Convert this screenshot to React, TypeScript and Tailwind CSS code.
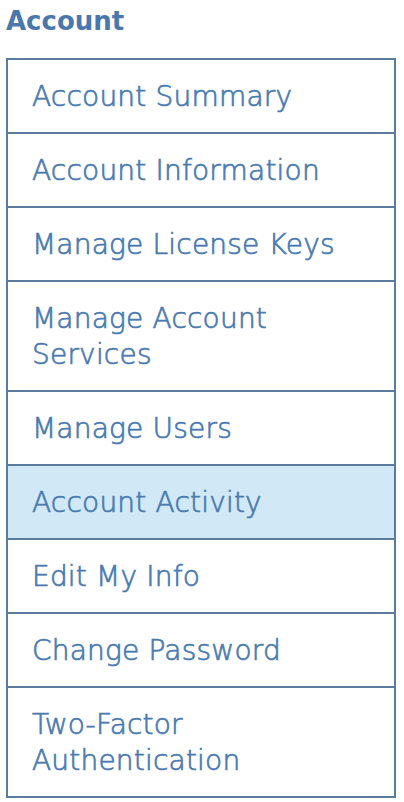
import React from "react";

const items = [
  { label: "Account Summary" },
  { label: "Account Information" },
  { label: "Manage License Keys" },
  { label: "Manage Account Services" },
  { label: "Manage Users" },
  { label: "Account Activity", active: true },
  { label: "Edit My Info" },
  { label: "Change Password" },
  { label: "Two-Factor Authentication" },
];

export default function App() {
  return (
    <div
      className="bg-white w-[404px] h-[802px] pl-[6px]"
      style={{ fontFamily: '"DejaVu Sans", sans-serif' }}
    >
      <h1 className="text-[26px] font-semibold text-[#4a78ab] leading-[42px] h-[58px]">
        Account
      </h1>
      <ul className="w-[390px] border-2 border-[#5b7a9d]">
        {items.map((it, i) => (
          <li
            key={it.label}
            className={`${i > 0 ? "border-t-2 border-[#5b7a9d]" : ""} ${
              it.active ? "bg-[#d1e8f7]" : "bg-white"
            } pt-[19px] pb-[17px] pl-[24px] pr-[20px] text-[28px] font-light tracking-[0.2px] leading-[36px] text-[#4a7ab0] [-webkit-text-stroke:0.7px_#4a7ab0]`}
          >
            {it.label}
          </li>
        ))}
      </ul>
    </div>
  );
}
